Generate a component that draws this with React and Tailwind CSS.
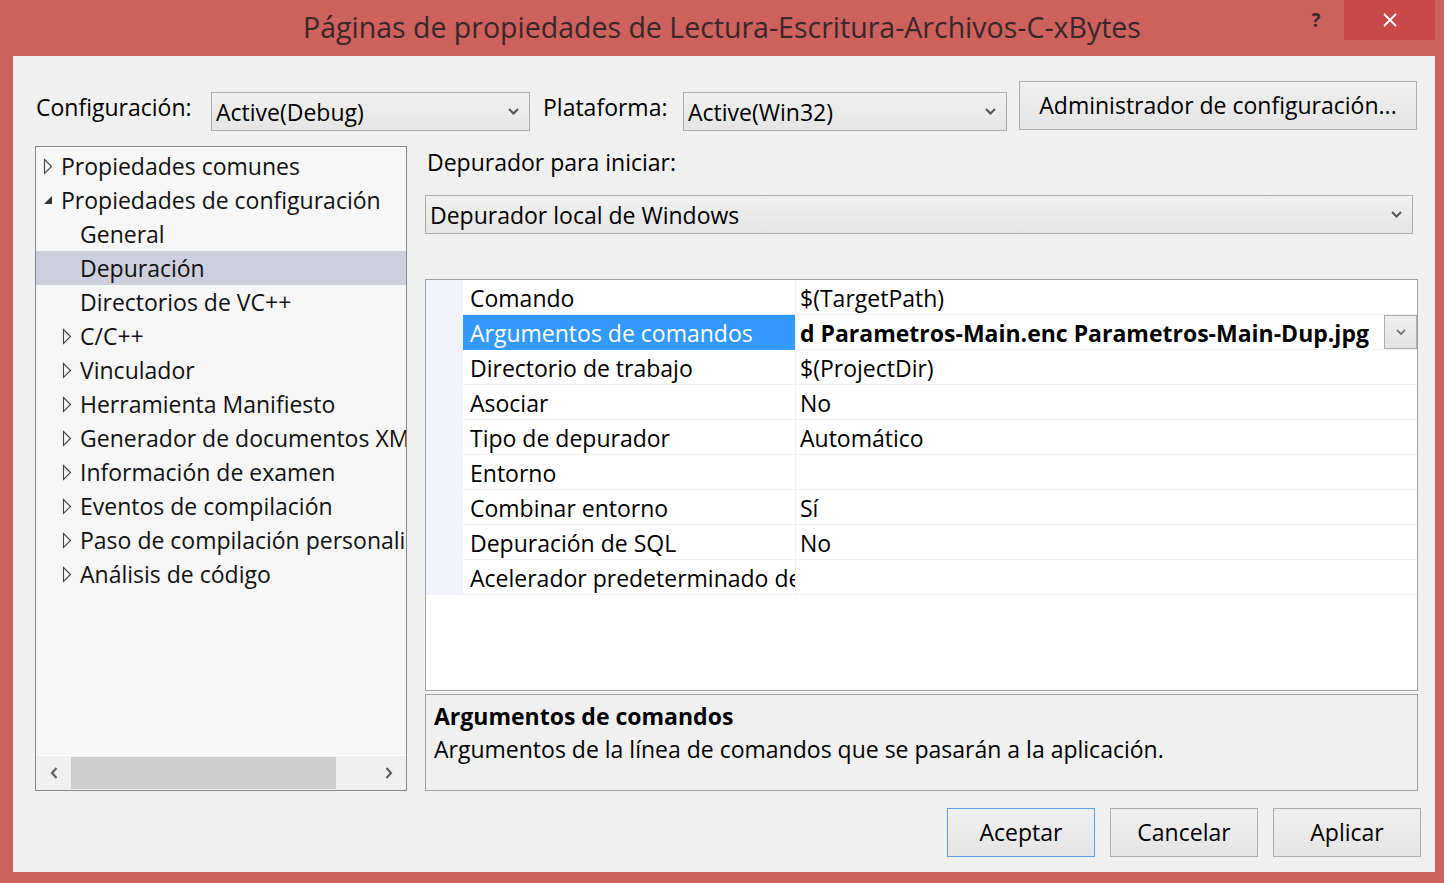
import { useState } from "react";

// Property page dialog (Windows 8 style)

const TREE = [
  { label: "Propiedades comunes", level: 0, arrow: "closed" },
  { label: "Propiedades de configuración", level: 0, arrow: "open" },
  { label: "General", level: 1 },
  { label: "Depuración", level: 1, selected: true },
  { label: "Directorios de VC++", level: 1 },
  { label: "C/C++", level: 1, arrow: "closed" },
  { label: "Vinculador", level: 1, arrow: "closed" },
  { label: "Herramienta Manifiesto", level: 1, arrow: "closed" },
  { label: "Generador de documentos XML", level: 1, arrow: "closed" },
  { label: "Información de examen", level: 1, arrow: "closed" },
  { label: "Eventos de compilación", level: 1, arrow: "closed" },
  { label: "Paso de compilación personalizada", level: 1, arrow: "closed" },
  { label: "Análisis de código", level: 1, arrow: "closed" },
];

const PROPS = [
  { name: "Comando", value: "$(TargetPath)" },
  { name: "Argumentos de comandos", value: "d Parametros-Main.enc Parametros-Main-Dup.jpg", selected: true },
  { name: "Directorio de trabajo", value: "$(ProjectDir)" },
  { name: "Asociar", value: "No" },
  { name: "Tipo de depurador", value: "Automático" },
  { name: "Entorno", value: "" },
  { name: "Combinar entorno", value: "Sí" },
  { name: "Depuración de SQL", value: "No" },
  { name: "Acelerador predeterminado de C++ AMP", value: "" },
];

function Chevron({ className = "" }) {
  return (
    <svg width="11" height="7" viewBox="0 0 11 7" className={className}>
      <path d="M1 1l4.5 4.5L10 1" stroke="#555" strokeWidth="2" fill="none" />
    </svg>
  );
}

function Combo({ value, className = "" }) {
  return (
    <div
      className={`flex items-center h-[39px] border border-[#acacac] bg-gradient-to-b from-[#f0f0f0] to-[#e5e5e5] ${className}`}
    >
      <span className="flex-1 pl-[4px] text-[23px] leading-[30px] whitespace-nowrap overflow-hidden">{value}</span>
      <Chevron className="mr-[10px] shrink-0" />
    </div>
  );
}

function Button({ children, className = "", primary }) {
  return (
    <button
      className={`flex items-center justify-center border bg-gradient-to-b from-[#efefef] to-[#e5e5e5] text-[23px] text-black ${
        primary ? "border-[#5aa0e6]" : "border-[#adadad]"
      } ${className}`}
    >
      {children}
    </button>
  );
}

function TreeArrow({ type }) {
  if (type === "open") {
    return (
      <svg width="10" height="10" viewBox="0 0 10 10">
        <path d="M9 1v8H1z" fill="#333" />
      </svg>
    );
  }
  if (type === "closed") {
    return (
      <svg width="10" height="17" viewBox="0 0 10 17">
        <path d="M1.5 1.5l7 7-7 7z" stroke="#444" strokeWidth="1.1" fill="none" strokeLinejoin="miter" />
      </svg>
    );
  }
  return null;
}

export default function App() {
  const [selected] = useState(3);

  return (
    <div className="w-[1444px] h-[883px] bg-[#cd615d] flex flex-col overflow-hidden font-['Open_Sans',sans-serif] text-black">
      {/* Title bar */}
      <div className="relative h-[56px] flex items-center justify-center">
        <span className="text-[28.5px] text-[#3b2727] leading-none -mt-[1px]">
          Páginas de propiedades de Lectura-Escritura-Archivos-C-xBytes
        </span>
        <div className="absolute right-[9px] top-0 flex">
          <span className="w-[56px] h-[40px] flex items-center justify-center text-[19px] font-bold text-[#3b2a2a]">?</span>
          <div className="w-[91px] h-[40px] bg-[#c7494a] flex items-center justify-center">
            <svg width="14" height="14" viewBox="0 0 14 14">
              <path d="M1 1l12 12M13 1L1 13" stroke="#fff" strokeWidth="2" />
            </svg>
          </div>
        </div>
      </div>

      {/* Client area */}
      <div className="flex-1 ml-[13px] mr-[9px] mb-[11px] bg-[#f0f0f0] flex flex-col pl-[22px] pr-[14px]">
        {/* Configuration row */}
        <div className="mt-[25px] h-[50px] flex items-start">
          <span className="w-[175px] ml-[1px] mt-[11px] text-[23px] leading-[30px]">Configuración:</span>
          <Combo value="Active(Debug)" className="mt-[11px] w-[319px]" />
          <span className="w-[140px] ml-[13px] mt-[11px] text-[23px] leading-[30px]">Plataforma:</span>
          <Combo value="Active(Win32)" className="mt-[11px] w-[324px]" />
          <Button className="ml-[12px] w-[398px] h-[49px]">Administrador de configuración...</Button>
        </div>

        {/* Body */}
        <div className="mt-[15px] h-[645px] flex gap-[18px]">
          {/* Tree */}
          <div className="w-[372px] h-full border border-[#828790] bg-[#f6f6f6] flex flex-col">
            <div className="flex-1 pt-[2px] overflow-hidden">
              {TREE.map((item, i) => (
                <div
                  key={item.label}
                  className={`h-[34px] flex items-center whitespace-nowrap text-[23px] ${
                    i === selected ? "bg-[#cdd0dc]" : ""
                  } ${item.level === 0 ? "pl-[7px]" : "pl-[26px]"}`}
                >
                  <span className="w-[18px] shrink-0 flex items-center">
                    <TreeArrow type={item.arrow} />
                  </span>
                  <span className="text-[#111]">{item.label}</span>
                </div>
              ))}
            </div>
            <div className="h-[35px] bg-[#f0f0f0] border-t border-white flex items-center">
              <span className="w-[35px] flex justify-center">
                <svg width="8" height="12" viewBox="0 0 8 12">
                  <path d="M6.5 1L2 6l4.5 5" stroke="#606060" strokeWidth="2.2" fill="none" />
                </svg>
              </span>
              <div className="w-[265px] h-[32px] bg-[#cdcdcd]" />
              <div className="flex-1" />
              <span className="w-[35px] flex justify-center">
                <svg width="8" height="12" viewBox="0 0 8 12">
                  <path d="M1.5 1L6 6l-4.5 5" stroke="#606060" strokeWidth="2.2" fill="none" />
                </svg>
              </span>
            </div>
          </div>

          {/* Right column */}
          <div className="w-[993px] flex flex-col">
            <span className="ml-[2px] mt-[1px] text-[23px] leading-[30px]">Depurador para iniciar:</span>
            <Combo value="Depurador local de Windows" className="mt-[18px] w-[988px]" />

            {/* Property grid */}
            <div className="mt-[45px] h-[412px] border border-[#a0a0a0] bg-white overflow-hidden">
              {PROPS.map((p) => (
                <div key={p.name} className="h-[35px] flex text-[23px]">
                  <div className="w-[37px] shrink-0 bg-[#f0f3f9]" />
                  <div
                    className={`w-[332px] shrink-0 pl-[7px] pt-[2px] flex items-center whitespace-nowrap overflow-hidden border-b ${
                      p.selected ? "bg-[#3399ff] text-white border-[#3399ff]" : "border-[#f0f0f0]"
                    }`}
                  >
                    {p.name}
                  </div>
                  <div className="flex-1 flex items-center border-b border-l border-[#f0f0f0] pl-[4px] whitespace-nowrap overflow-hidden">
                    <span className={`flex-1 pt-[2px] ${p.selected ? "font-bold" : ""}`}>{p.value}</span>
                    {p.selected && (
                      <div className="w-[33px] h-[34px] shrink-0 border border-[#acacac] bg-gradient-to-b from-[#efefef] to-[#e3e3e3] flex items-center justify-center">
                        <svg width="10" height="6" viewBox="0 0 10 6">
                          <path d="M1 1l4 4 4-4" stroke="#666" strokeWidth="1.6" fill="none" />
                        </svg>
                      </div>
                    )}
                  </div>
                </div>
              ))}
            </div>

            {/* Description */}
            <div className="mt-[3px] h-[97px] border border-[#a0a0a0] bg-[#f0f0f0] pl-[8px] pt-[6px]">
              <div className="text-[23px] leading-[30px] font-bold">Argumentos de comandos</div>
              <div className="mt-[3px] text-[23px] leading-[30px]">
                Argumentos de la línea de comandos que se pasarán a la aplicación.
              </div>
            </div>
          </div>
        </div>

        {/* Bottom buttons */}
        <div className="mt-[17px] flex justify-end gap-[15px]">
          <Button primary className="w-[148px] h-[49px]">Aceptar</Button>
          <Button className="w-[148px] h-[49px]">Cancelar</Button>
          <Button className="w-[148px] h-[49px]">Aplicar</Button>
        </div>
      </div>
    </div>
  );
}
